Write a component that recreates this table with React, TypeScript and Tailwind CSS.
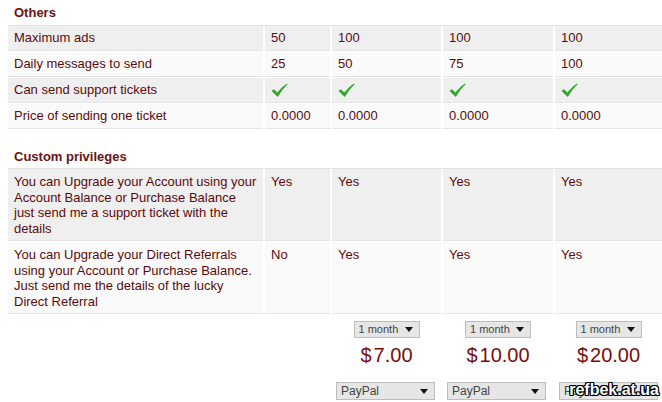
import React from "react";

const GRID = "grid grid-cols-[255px_65px_109px_110px_1fr] gap-x-[2px]";

function Check() {
  return (
    <svg width="17" height="15" viewBox="0 0 17 15">
      <path
        d="M0.5 8 L3 6.3 L6.3 9.6 Q10.5 4 16 0.6 L16.6 1.3 Q11.4 6 6.8 14 Z"
        fill="#33a52b"
      />
    </svg>
  );
}

function Arrow() {
  return (
    <svg width="8" height="5" viewBox="0 0 8 5">
      <path d="M0 0 L8 0 L4 5 Z" fill="#111" />
    </svg>
  );
}

type Cell = React.ReactNode;

const others: { label: string; vals: Cell[] }[] = [
  { label: "Maximum ads", vals: ["50", "100", "100", "100"] },
  { label: "Daily messages to send", vals: ["25", "50", "75", "100"] },
  { label: "Can send support tickets", vals: [<Check />, <Check />, <Check />, <Check />] },
  { label: "Price of sending one ticket", vals: ["0.0000", "0.0000", "0.0000", "0.0000"] },
];

const custom: { label: React.ReactNode; vals: string[] }[] = [
  {
    label: (
      <>
        You can Upgrade your Account using your
        <br />
        Account Balance or Purchase Balance
        <br />
        just send me a support ticket with the
        <br />
        details
      </>
    ),
    vals: ["Yes", "Yes", "Yes", "Yes"],
  },
  {
    label: (
      <>
        You can Upgrade your Direct Referrals
        <br />
        using your Account or Purchase Balance.
        <br />
        Just send me the details of the lucky
        <br />
        Direct Referral
      </>
    ),
    vals: ["No", "Yes", "Yes", "Yes"],
  },
];

const prices = ["$7.00", "$10.00", "$20.00"];

export default function App() {
  return (
    <div
      className="relative w-[662px] h-[402px] overflow-hidden bg-white text-[13px] text-[#5c0a0a]"
      style={{ fontFamily: '"Liberation Sans", Arial, sans-serif' }}
    >
      {/* Others header */}
      <div className="ml-[8px] h-[26px] border-b border-[#e2e2e2] pl-[6px] pt-[5px] leading-[16px] font-bold text-[#6a1414]">
        Others
      </div>
      <div className="ml-[8px] flex flex-col gap-[1px]">
        {others.map((r, i) => (
          <div key={i} className={GRID}>
            {[r.label, ...r.vals].map((v, j) => (
              <div
                key={j}
                className={`h-[25px] border-b border-[#e4e4e4] flex items-center px-[6px] whitespace-nowrap ${
                  i % 2 === 0 ? "bg-[#efefef]" : "bg-[#fafafa]"
                }`}
              >
                {v}
              </div>
            ))}
          </div>
        ))}
      </div>

      {/* Custom privileges header */}
      <div className="ml-[8px] h-[40px] border-b border-[#e2e2e2] pl-[6px] pt-[20px] leading-[16px] font-bold text-[#6a1414]">
        Custom privileges
      </div>
      <div className="ml-[8px] flex flex-col gap-[1px]">
        {custom.map((r, i) => (
          <div key={i} className={GRID}>
            {[r.label, ...r.vals].map((v, j) => (
              <div
                key={j}
                className={`border-b border-[#e4e4e4] px-[6px] pt-[5px] pb-[4px] leading-[15.5px] whitespace-nowrap ${
                  i % 2 === 0 ? "bg-[#efefef]" : "bg-[#fafafa]"
                }`}
              >
                {v}
              </div>
            ))}
          </div>
        ))}
      </div>

      {/* Purchase row */}
      <div className={`ml-[8px] ${GRID}`}>
        <div />
        <div />
        {prices.map((p, i) => (
          <div key={i} className="flex flex-col">
            <div className="flex flex-col items-center pt-[7px]">
              <div className="w-[66px] h-[17px] bg-[#e6e6e6] border border-[#bdbdbd] flex items-center justify-between pl-[4px] pr-[6px] text-[11px] text-[#444]">
                <span>1 month</span>
                <Arrow />
              </div>
              <div className="mt-[5px] h-[24px] leading-[24px] text-[20px] text-[#7a0c0c]">
                <span className="mr-[2px]">{p.slice(0, 1)}</span>
                {p.slice(1)}
              </div>
            </div>
            <div className="ml-[4px] mt-[15px] w-[99px] h-[18px] bg-[#e6e6e6] border border-[#bdbdbd] flex items-center justify-between pl-[4px] pr-[6px] text-[12px] text-[#444]">
              <span>PayPal</span>
              <Arrow />
            </div>
          </div>
        ))}
      </div>

      {/* watermark */}
      <div
        className="absolute right-[3px] bottom-[3px] text-[16px] font-bold text-white leading-[18px]"
        style={{
          fontFamily: '"Liberation Sans", Arial, sans-serif',
          textShadow:
            "1px 0 0 #000, -1px 0 0 #000, 0 1px 0 #000, 0 -1px 0 #000, 1px 1px 0 #000, -1px -1px 0 #000, 1px -1px 0 #000, -1px 1px 0 #000",
        }}
      >
        refbek.at.ua
      </div>
    </div>
  );
}
